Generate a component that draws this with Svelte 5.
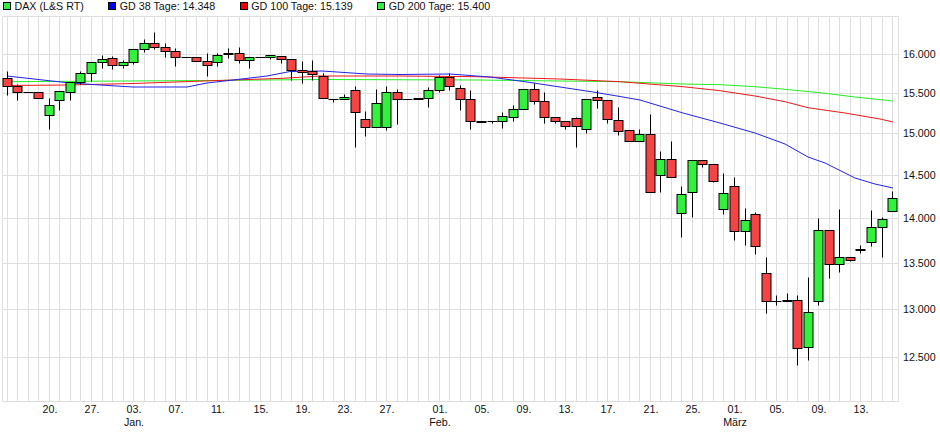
<script>
  // [colour, bodyTop, bodyBottom, wickTop, wickBottom]  colour: r, g, d (flat line), t (thick flat)
  const raw = [
    ['r',78,86,71,95],['r',86,92,84,100],['d',92,92,92,92],['r',92,98,92,98],['g',105,115,98,129],
    ['g',91,100,91,110],['g',82,92,82,100],['g',73,82,71,84],['g',62,73,62,81],['g',59,62,55,68],
    ['r',58,65,56,69],['g',62,65,60,68],['g',49,62,49,64],['g',43,49,39,52],['r',43,47,32,49],
    ['r',47,51,43,57],['r',51,57,48,66],['d',57,57,57,57],['r',57,61,57,61],['r',61,65,53,76],
    ['g',55,62,53,66],['t',53,53,48,58],['r',53,60,47,63],['g',57,60,57,68],['d',57,57,57,57],
    ['g',55,57,55,59],['r',56,59,56,63],['r',59,70,59,80],['r',70,72,61,83],['r',71,74,60,80],
    ['r',76,98,73,98],['d',99,99,99,102],['g',97,99,94,99],['r',90,112,86,147],['r',119,127,111,136],
    ['g',103,127,89,127],['g',92,127,86,130],['r',92,99,89,124],['d',99,99,99,99],['t',98,98,98,98],
    ['g',90,98,87,107],['g',77,90,75,92],['r',77,86,73,90],['r',88,99,85,110],['r',99,121,90,129],
    ['t',121,121,121,121],['d',121,121,121,123],['g',116,121,112,128],['g',109,117,105,121],['g',89,109,89,109],
    ['r',89,101,83,104],['r',101,117,92,123],['r',117,121,117,123],['r',121,126,121,129],['r',118,126,117,147],
    ['g',99,129,99,133],['r',97,100,90,108],['r',100,119,100,123],['r',120,131,107,135],['r',130,141,130,141],
    ['g',134,141,129,141],['r',134,192,114,192],['g',159,175,151,192],['r',159,177,141,177],['g',194,213,186,237],
    ['g',160,192,160,217],['r',160,164,160,167],['r',164,181,164,182],['g',193,209,173,214],['r',186,231,177,240],
    ['g',220,231,208,245],['r',214,246,212,254],['r',273,301,257,313],['d',301,301,295,305],['t',300,300,293,301],
    ['r',300,348,295,365],['g',312,347,277,360],['g',230,301,218,305],['r',230,264,230,278],['g',257,264,209,272],
    ['r',257,260,257,261],['t',249,249,245,253],['g',227,242,210,246],['g',219,227,217,257],['g',198,211,191,211]
  ];

  const cx = (i) => Math.floor(7.2 + 10.54 * i) + 0.5;
  const candles = raw.map(([k, t, b, wt, wb], i) => ({ k, t: t + 0.5, b: b + 0.5, wt: wt + 0.5, wb: wb + 0.5, x: cx(i) }));

  const yLines = [
    ['16.000', 54], ['15.500', 93], ['15.000', 133], ['14.500', 175],
    ['14.000', 218], ['13.500', 263], ['13.000', 309], ['12.500', 357]
  ];
  const xLabels = [
    ['20.', 4], ['27.', 8], ['03.', 12], ['07.', 16], ['11.', 20], ['15.', 24], ['19.', 28], ['23.', 32], ['27.', 36],
    ['01.', 41], ['05.', 45], ['09.', 49], ['13.', 53], ['17.', 57], ['21.', 61], ['25.', 65], ['01.', 69],
    ['05.', 73], ['09.', 77], ['13.', 81]
  ];
  const months = [['Jan.', 12], ['Feb.', 41], ['März', 69]];

  const blue = '7,76 67,82.7 100,85 133,87 187,87 207,83 233,80 267,76 290,71.5 322,71 367,74 400,74.5 450,74 490,77 527,82 560,87 593,92 620,96.5 640,100 683,113 720,123 755,133 785,144 808,157 825,163 855,178 875,184 893,188';
  const red = '7,85.5 67,85 133,83.5 213,80.7 283,78.3 320,76 400,76 477,76.7 560,79 620,81.7 683,86.7 720,90.7 755,96 785,101.7 808,107.7 845,113 880,119 893,122';
  const green = '7,81.7 213,80.5 320,79.5 477,80 560,81 620,81.7 683,84 720,84.7 755,86.7 785,89.3 820,92.7 855,97 893,101';

  const legend = [
    { label: 'DAX (L&S RT)', cls: 'sw-green' },
    { label: 'GD 38 Tage: 14.348', cls: 'sw-blue' },
    { label: 'GD 100 Tage: 15.139', cls: 'sw-red' },
    { label: 'GD 200 Tage: 15.400', cls: 'sw-green' }
  ];
</script>

<div class="page">
  <div class="legend">
    {#each legend as item}
      <div class="item">
        <span class="swatch {item.cls}"></span>
        <span>{item.label}</span>
      </div>
    {/each}
  </div>
  <svg class="chart" width="940" height="419" viewBox="0 16 940 419">
    <g class="grid">
      <line x1="2.5" x2="898.5" y1="16.5" y2="16.5" />
      <line x1="2.5" x2="898.5" y1="401.5" y2="401.5" />
      <line x1="2.5" x2="2.5" y1="16.5" y2="401.5" />
      <line x1="898.5" x2="898.5" y1="16.5" y2="401.5" />
      {#each yLines as [, y]}
        <line x1="2.5" x2="898.5" y1={y + 0.5} y2={y + 0.5} />
      {/each}
      {#each candles as c}
        <line x1={c.x} x2={c.x} y1="16.5" y2="401.5" />
      {/each}
    </g>

    <polyline class="ma ma-green" points={green} />
    <polyline class="ma ma-red" points={red} />
    <polyline class="ma ma-blue" points={blue} />

    {#each candles as c}
      {#if c.wb > c.wt}
        <line class="wick" x1={c.x} x2={c.x} y1={c.wt} y2={c.wb} />
      {/if}
      {#if c.k === 'd'}
        <line class="wick" x1={c.x - 5} x2={c.x + 5} y1={c.t} y2={c.t} />
      {:else if c.k === 't'}
        <rect class="flat" x={c.x - 5} y={c.t - 0.5} width="10" height="2" />
      {:else}
        <rect class={c.k === 'r' ? 'body red' : 'body green'} x={c.x - 4.5} y={c.t} width="9" height={c.b - c.t} />
      {/if}
    {/each}

    <g class="labels">
      {#each yLines as [label, y]}
        <text x="903" y={y + 4}>{label}</text>
      {/each}
      {#each xLabels as [label, i]}
        <text class="mid" x={cx(i) + 0.5} y="413">{label}</text>
      {/each}
      {#each months as [label, i]}
        <text class="mid" x={cx(i) + 0.5} y="426">{label}</text>
      {/each}
    </g>
  </svg>
</div>

<style>
  :global(body) {
    margin: 0;
    background: #fff;
  }
  .page {
    width: 940px;
    height: 435px;
    overflow: hidden;
    font-family: "Liberation Sans", Arial, sans-serif;
    font-size: 10.7px;
    color: #111;
  }
  .legend {
    display: flex;
    height: 16px;
    padding-left: 3px;
    box-sizing: border-box;
    line-height: 13px;
    gap: 24.5px;
  }
  .item {
    display: flex;
    align-items: flex-start;
    gap: 3.5px;
    white-space: nowrap;
  }
  .swatch {
    width: 6px;
    height: 6px;
    margin-top: 2px;
    border: 1px solid #000;
    flex: none;
  }
  .sw-green { background: #33f03c; }
  .sw-blue { background: #0000f0; }
  .sw-red { background: #f00000; }
  .chart {
    display: block;
  }
  .grid line {
    stroke: #dedede;
    stroke-width: 1;
  }
  .ma {
    fill: none;
    stroke-width: 1;
  }
  .ma-green { stroke: #22ee22; }
  .ma-red { stroke: #f01818; }
  .ma-blue { stroke: #2222ee; }
  .wick {
    stroke: #000;
    stroke-width: 1;
  }
  .flat {
    fill: #000;
  }
  .body {
    stroke: #000;
    stroke-width: 1;
  }
  .red { fill: #f44444; }
  .green { fill: #33f03c; }
  .labels text {
    font-family: "Liberation Sans", Arial, sans-serif;
    font-size: 10.7px;
    fill: #111;
  }
  .labels .mid {
    text-anchor: middle;
  }
</style>
